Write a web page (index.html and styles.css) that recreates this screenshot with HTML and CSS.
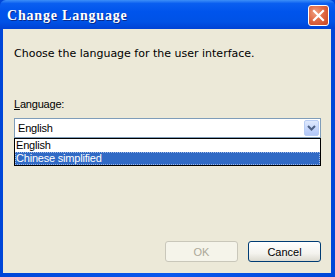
FILE: index.html
```html
<!DOCTYPE html>
<html>
<head>
<meta charset="utf-8">
<link rel="stylesheet" href="styles.css">
</head>
<body>
<div class="window">
  <div class="titlebar">
    <span class="title">Change Language</span>
    <span class="close">
      <svg width="13" height="13" viewBox="0 0 13 13"><path d="M2 2 L11 11 M11 2 L2 11" stroke="#fff" stroke-width="2.2" stroke-linecap="square"/></svg>
    </span>
  </div>
  <div class="client">
    <p class="intro">Choose the language for the user interface.</p>
    <div class="label"><u>L</u>anguage:</div>
    <div class="combo">
      <span class="combo-text">English</span>
      <span class="drop">
        <svg width="9" height="6" viewBox="0 0 9 6"><path d="M1 1 L4.5 4.5 L8 1" fill="none" stroke="#4d6185" stroke-width="2"/></svg>
      </span>
    </div>
    <div class="list">
      <div class="item">English</div>
      <div class="item selected">Chinese simplified</div>
    </div>
    <div class="spacer"></div>
    <div class="buttons">
      <button class="btn disabled">OK</button>
      <button class="btn">Cancel</button>
    </div>
  </div>
</div>
</body>
</html>
```
FILE: styles.css
```css
html, body {
  margin: 0;
  padding: 0;
  background: #ffffff;
}
.window {
  width: 335px;
  height: 277px;
  display: flex;
  flex-direction: column;
  background: linear-gradient(90deg, #0046d8 0%, #0a58ee 50%, #0046d8 100%);
  box-sizing: border-box;
}
.titlebar {
  height: 29px;
  flex: none;
  display: flex;
  align-items: center;
  justify-content: space-between;
  padding: 0 6px 0 7px;
  background: linear-gradient(180deg, #3d8ff8 0%, #0a5ff0 12%, #0054ec 40%, #0052e6 75%, #0042d4 100%);
  border-radius: 6px 6px 0 0;
}
.title {
  color: #ffffff;
  font-family: "Liberation Serif", serif;
  font-weight: bold;
  font-size: 14px;
  letter-spacing: 0.8px;
  text-shadow: 1px 1px 0 #0a2a8a;
  margin-top: 2px;
}
.close {
  width: 19px;
  height: 19px;
  border: 1px solid #ffffff;
  border-radius: 3px;
  background: radial-gradient(circle at 35% 35%, #f0a080 0%, #e06a45 45%, #c8431f 100%);
  display: flex;
  align-items: center;
  justify-content: center;
  margin-top: 2px;
}
.client {
  flex: 1;
  margin: 0 4px 4px 3px;
  background: #ece9d8;
  display: flex;
  flex-direction: column;
  padding: 18px 10px 11px 11px;
  font-family: "Liberation Sans", Arial, sans-serif;
  font-size: 11px;
  letter-spacing: -0.2px;
  color: #000;
}
.intro {
  margin: 0;
  line-height: 13px;
  font-family: "DejaVu Sans", Verdana, sans-serif;
  letter-spacing: 0;
}
.label {
  margin-top: 38px;
  line-height: 13px;
}
.combo {
  margin-top: 7px;
  height: 18px;
  border: 1px solid #7f9db9;
  background: #fff;
  display: flex;
  align-items: center;
  justify-content: space-between;
}
.combo-text {
  padding-left: 3px;
}
.drop {
  width: 15px;
  height: 16px;
  margin-right: 1px;
  border: 1px solid #b9cdf4;
  border-radius: 2px;
  background: linear-gradient(180deg, #dfe9fd 0%, #c3d4fb 60%, #b2c7f7 100%);
  display: flex;
  align-items: center;
  justify-content: center;
  box-sizing: border-box;
}
.list {
  border: 1px solid #000;
  background: #fff;
}
.item {
  height: 13px;
  line-height: 13px;
  padding-left: 1px;
}
.item.selected {
  background: #316ac5;
  color: #fff;
  outline: 1px dotted #9fb8e6;
  outline-offset: -1px;
}
.spacer {
  flex: 1;
}
.buttons {
  display: flex;
  justify-content: flex-end;
  gap: 10px;
}
.btn {
  width: 73px;
  height: 21px;
  padding: 0;
  font-family: "Liberation Sans", Arial, sans-serif;
  font-size: 11px;
  color: #000;
  border: 1px solid #003c74;
  border-radius: 3px;
  background: linear-gradient(180deg, #ffffff 0%, #f4f3ee 60%, #dcdad0 100%);
}
.btn.disabled {
  color: #aca899;
  border-color: #c9c7ba;
  background: #f5f4ea;
}
```
